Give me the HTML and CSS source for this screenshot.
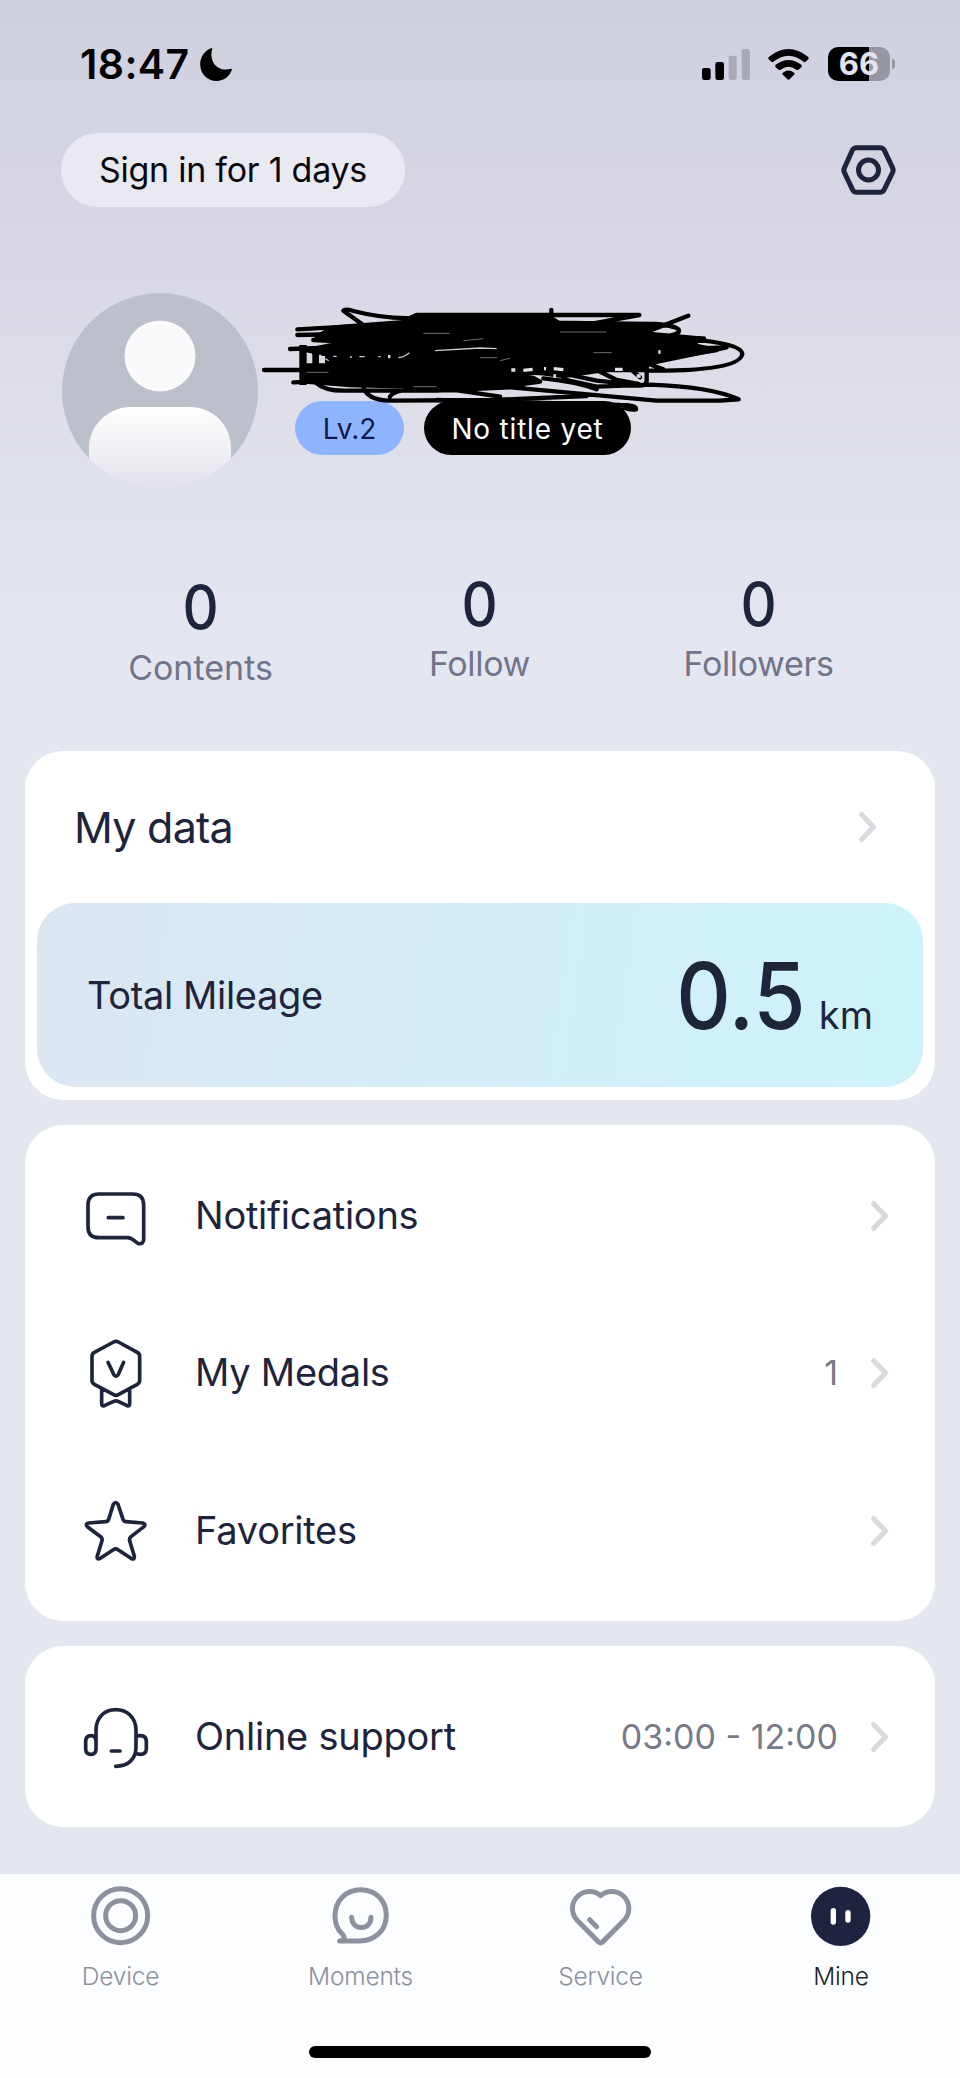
FILE: index.html
```html
<!DOCTYPE html>
<html lang="en">
<head>
<meta charset="utf-8">
<title>Mine</title>
<link rel="stylesheet" href="styles.css">
</head>
<body>
<div class="app">
  <header class="status">
    <div class="status-left">
      <span class="clock">18:47</span>
      <svg class="moon" viewBox="600 143 96 100"><path d="M637 144C628 172 640 200 664 207C675 210 686 208 694 206Q697 206 696 210C689 230 671 243 650 243C622 243 600 221 600 193C600 171 613 151 633 144Q637 143 637 144Z"/></svg>
    </div>
    <div class="status-right">
      <svg class="signal" viewBox="666 144 144 93">
        <rect x="666" y="201" width="26" height="36" rx="7"/><rect x="706" y="183" width="26" height="54" rx="7"/>
        <rect class="dim" x="746" y="164" width="24" height="73" rx="7"/><rect class="dim" x="785" y="144" width="25" height="93" rx="7"/>
      </svg>
      <svg class="wifi" viewBox="865 143 124 94"><path d="M867 167Q927 119 987 167Q990 171 987 174L979 182Q976 184 973 182Q927 145 881 182Q878 184 875 182L867 174Q864 171 867 167Z"/><path d="M888 191Q927 161 966 191Q969 195 966 198L957 206Q954 208 951 206Q927 187 903 206Q900 208 897 206L888 198Q885 195 888 191Z"/><path d="M910 215Q927 201 944 215Q948 218 944 221L931 234Q927 238 923 234L910 221Q906 218 910 215Z"/></svg>
      <div class="battery"><span class="battery-body">66</span><span class="battery-cap"></span></div>
    </div>
  </header>

  <div class="topbar">
    <span class="signin">Sign in for 1 days</span>
    <svg class="gear" viewBox="1085 434 164 150"><path d="M1130 442H1202Q1210 442 1214 449L1239 502Q1243 510 1239 517L1214 568Q1210 576 1202 576H1131Q1123 576 1119 568L1095 517Q1091 510 1095 502L1119 449Q1123 442 1130 442Z"/><circle cx="1167" cy="509" r="30"/></svg>
  </div>

  <section class="profile">
    <svg class="avatar" viewBox="0 0 196 196">
      <defs>
        <clipPath id="disc"><circle cx="98" cy="98" r="98"/></clipPath>
        <linearGradient id="torso" x1="0" y1="0" x2="0" y2="1"><stop offset="0" stop-color="#fff"/><stop offset="1" stop-color="#dfdfe9"/></linearGradient>
      </defs>
      <g clip-path="url(#disc)">
        <path d="M0 0H196V166H169V156C169 132 151 114 127 114H70C46 114 27 132 27 156V166H0Z" fill="#bbc0ca"/>
        <circle cx="98" cy="63" r="35.5" fill="#fafafd"/>
        <path d="M27 200V156C27 132 46 114 70 114H127C151 114 169 132 169 156V200Z" fill="url(#torso)"/>
      </g>
    </svg>
    <div class="badges">
      <span class="badge level">Lv.2</span>
      <span class="badge title">No title yet</span>
    </div>
    <svg class="scribble" viewBox="0 0 1560 540">
      <path class="mass" d="M200 140L250 113L480 98L500 76L890 76L925 98L1215 103L1180 130L1350 145L1330 165L1400 180L1200 212L1185 240H1060L940 258L880 250L700 240L850 264L870 275L760 290L560 292L300 285L165 275V240L250 245L480 200L440 205L200 190L170 180L270 160Z"/>
      <path d="M42 240H160M120 177L260 172M130 277L300 270M142 118L250 112L480 95M142 135L280 132L560 110M190 150L400 160"/>
      <path d="M340 105L280 62Q285 55 310 63Q400 86 480 84L500 75H1168L1010 104"/>
      <path d="M904 60V80M1315 77L1180 130M925 100L1220 102Q1300 110 1285 128Q1260 145 1190 138M1190 145H1362L1300 165H1200"/>
      <path d="M1200 155L1360 152Q1475 165 1477 192Q1470 238 1250 242H1190M1200 180L1430 172L1270 205L1190 222M1190 220L1240 238"/>
      <path d="M200 280Q225 302 280 302H560L820 290M340 290Q350 330 420 332L730 330L1010 318M420 320Q430 298 540 292M560 292L750 320M760 290L1220 332H1410L1466 328Q1380 290 1200 284L1040 290L940 268M880 265Q980 275 1040 298M1190 190V270Q1190 288 1165 287L1080 286M1040 240L1100 270L1165 282M1140 235L1170 262"/>
      <path d="M960 255L1040 272L1120 280"/>
      <path d="M560 330L1110 345Q1160 345 1158 358Q1145 362 1118 352"/>
      <path class="block" d="M148 165H170V285H148ZM187 175H207V250H187ZM160 220H400V275H160ZM205 180H440V192H205Z"/>
      <path class="block" d="M225 190H440V250H225Z"/>
      <path class="glint" d="M208 212Q220 198 236 212M207 196H214M250 199H260M300 201H306M328 200H344M385 200H392M445 203Q465 200 478 188M555 182L690 174L740 176"/>
      <path class="glint faint" d="M690 203H742M750 212L780 205M930 126H1068M520 130H600M640 152L700 146M170 247H235M490 290H560M1030 188H1085"/>
      <path class="glint wide" d="M414 200H421M784 240H796M820 241L848 238M882 236H888M911 236L940 239M910 258H918M1095 238H1118M1160 258H1172M1225 186H1232"/>
      <path class="gap" d="M171 190H186V217H171Z"/>
    </svg>
  </section>

  <section class="stats">
    <div class="stat first"><b>0</b><span>Contents</span></div>
    <div class="stat"><b>0</b><span>Follow</span></div>
    <div class="stat"><b>0</b><span>Followers</span></div>
  </section>

  <main class="cards">
    <section class="card data">
      <div class="data-head"><h2>My data</h2><svg class="chev" viewBox="0 0 17 30"><path d="M2.5 2.5L14.5 15L2.5 27.5"/></svg></div>
      <div class="mileage"><span class="mileage-label">Total Mileage</span><div class="reading"><span class="amount">0.5</span><span class="unit">km</span></div></div>
    </section>

    <section class="card menu">
      <div class="row">
        <svg class="icon" viewBox="102 71 192 192"><path d="M147 101H248Q281 101 281 134V238Q280 252 266 250C255 246 249 232 232 232H147Q114 232 114 199V134Q114 101 147 101ZM175 172H219"/></svg>
        <span class="name">Notifications</span>
        <svg class="chev" viewBox="0 0 17 30"><path d="M2.5 2.5L14.5 15L2.5 27.5"/></svg>
      </div>
      <div class="row">
        <svg class="icon" viewBox="102 543 192 192"><path d="M191 546Q198 542 205 546L262 577Q269 581 269 589V661Q269 669 262 673L205 704Q198 708 191 704L133 673Q126 669 126 661V589Q126 581 133 577ZM174 607L191 643Q198 655 205 643L221 607M155 687V732Q155 740 163 737L191 724Q198 721 205 724L231 737Q239 740 239 732V687"/></svg>
        <span class="name">My Medals</span><span class="value">1</span>
        <svg class="chev" viewBox="0 0 17 30"><path d="M2.5 2.5L14.5 15L2.5 27.5"/></svg>
      </div>
      <div class="row">
        <svg class="icon" viewBox="102 1015 192 192"><path d="M190 1031Q197 1020 204 1031L219 1076Q221 1083 228 1083L278 1087Q289 1090 282 1098L243 1128Q237 1133 239 1140L253 1187Q254 1199 243 1193L204 1167Q197 1162 190 1167L151 1193Q139 1198 142 1186L156 1140Q158 1133 152 1128L112 1098Q105 1089 116 1087L167 1083Q174 1083 176 1076Z"/></svg>
        <span class="name">Favorites</span>
        <svg class="chev" viewBox="0 0 17 30"><path d="M2.5 2.5L14.5 15L2.5 27.5"/></svg>
      </div>
    </section>

    <section class="card support">
      <div class="row">
        <svg class="icon" viewBox="102 256 192 192"><path d="M138 390V332C138 294 163 270 197 270C232 270 258 294 258 332V382C258 418 235 440 197 440M138 365C138 353 133 348 123 348C112 348 107 354 107 365V387C107 399 112 404 123 404C133 404 138 399 138 387M258 351C262 349 266 348 271 348C283 348 289 354 289 365V387C289 399 283 404 271 404C266 404 261 403 258 400M184 394H210"/></svg>
        <span class="name">Online support</span><span class="value">03:00 - 12:00</span>
        <svg class="chev" viewBox="0 0 17 30"><path d="M2.5 2.5L14.5 15L2.5 27.5"/></svg>
      </div>
    </section>
  </main>

  <nav class="tabs">
    <a class="tab"><svg viewBox="270 104 184 184"><circle cx="362" cy="196" r="81"/><circle cx="362" cy="196" r="45"/></svg><span>Device</span></a>
    <a class="tab"><svg viewBox="991 104 184 184"><path d="M1020 272C1034 272 1037 263 1029 252C1014 239 1006 218 1006 196C1006 150 1040 118 1083 118C1128 118 1160 151 1160 194C1160 244 1122 272 1080 272ZM1056 201C1056 242 1114 242 1114 201"/></svg><span>Moments</span></a>
    <a class="tab"><svg viewBox="270 104 184 184"><path d="M362 136C341 118 312 121 294 137C272 157 273 188 290 208L355 274Q362 281 369 274L434 208C451 188 452 157 430 137C412 121 383 118 362 136ZM329 208L350 229"/></svg><span>Service</span></a>
    <a class="tab active"><svg viewBox="993 104 184 184"><circle class="face" cx="1085" cy="198" r="89"/><path class="eyes" d="M1063 181V215M1107 187V209"/></svg><span>Mine</span></a>
  </nav>
  <div class="home"></div>
</div>
</body>
</html>
```
FILE: styles.css
```css
body { margin: 0; }
.app {
  width: 960px; height: 2078px; overflow: hidden;
  display: flex; flex-direction: column;
  font-family: Inter, "Noto Sans", sans-serif; color: #1e243b;
  background: linear-gradient(#cfd0de 0, #d5d5e2 170px, #dddee8 400px, #e5e7f0 660px);
}
svg { display: block; overflow: visible; flex: none; }

.status { height: 128px; box-sizing: border-box; padding: 0 65px 0 80px; display: flex; justify-content: space-between; align-items: center; color: #000; }
.status-left { display: flex; align-items: center; gap: 12px; }
.clock { font-size: 41px; font-weight: 600; line-height: 50px; letter-spacing: 0.4px; width: 108px; white-space: nowrap; }
.moon { width: 32px; height: 33px; }
.status-right { display: flex; align-items: center; }
.signal { width: 48px; height: 31px; margin-right: 18px; }
.signal .dim { fill: #a9aab6; }
.wifi { width: 41px; height: 31px; margin-right: 19px; }
.battery { display: flex; align-items: center; gap: 2px; }
.battery-body { width: 62px; height: 34px; border-radius: 10px; background: linear-gradient(90deg, #000 66%, #9697a1 66%); color: #e4e4ee; font-size: 31px; font-weight: 650; line-height: 34px; text-align: center; letter-spacing: 0; }
.battery-cap { width: 3px; height: 10px; border-radius: 0 3px 3px 0; background: #9697a1; }

.topbar { height: 84px; padding: 0 64px 0 61px; display: flex; justify-content: space-between; align-items: center; }
.signin { width: 344px; height: 74px; border-radius: 37px; background: #e9e9f2; color: #08080c; font-size: 34px; line-height: 73px; text-align: center; letter-spacing: -0.25px; white-space: nowrap; }
.gear { width: 55px; height: 50px; fill: none; stroke: #1e243b; stroke-width: 15; }

.profile { position: relative; height: 196px; margin-top: 81px; padding-left: 62px; display: flex; gap: 37px; }
.avatar { width: 196px; height: 196px; }
.badges { display: flex; gap: 20px; padding-top: 108px; }
.badge { height: 54px; border-radius: 27px; font-size: 28px; line-height: 56px; text-align: center; white-space: nowrap; }
.level { width: 109px; background: #8fb4ff; color: #111a4a; }
.title { width: 207px; background: #000; color: #fff; letter-spacing: 0.8px; }
.scribble { position: absolute; left: 250px; top: -3px; width: 520px; height: 180px; fill: none; stroke: #000; stroke-width: 13; stroke-linecap: round; stroke-linejoin: round; }
.scribble .mass { fill: #000; }
.scribble .block { fill: #000; stroke: none; }
.scribble .gap { fill: #dadae4; stroke: none; }
.scribble .glint { stroke: #c9c9d2; stroke-width: 4; stroke-linecap: butt; }
.scribble .faint { stroke: #6c6c74; stroke-width: 3; }
.scribble .wide { stroke: #e0e0e8; stroke-width: 10; }

.stats { height: 262px; padding: 0 61px; display: grid; grid-template-columns: 279px 279px 279px; }
.stat { display: flex; flex-direction: column; align-items: center; padding-top: 84px; }
.stat b { font-size: 61px; line-height: 62px; font-weight: 450; transform: scaleX(.92); }
.stat span { font-size: 34px; line-height: 40px; color: #71758a; margin-top: 9px; letter-spacing: -0.35px; }
.stat.first { padding-top: 87px; }
.stat.first span { margin-top: 10px; letter-spacing: 0; }

.cards { padding: 0 25px; display: flex; flex-direction: column; gap: 25px; height: 1123px; }
.card { background: #fff; border-radius: 38px; }
.chev { width: 17px; height: 30px; fill: none; stroke: #d9d9df; stroke-width: 5; stroke-linecap: round; stroke-linejoin: round; }
.data { height: 349px; padding: 0 12px; box-sizing: border-box; }
.data-head { height: 152px; padding: 0 47px 0 37px; display: flex; align-items: center; justify-content: space-between; }
.data-head h2 { margin: 0; font-size: 43px; font-weight: 400; line-height: 52px; letter-spacing: -0.75px; }
.mileage { height: 184px; border-radius: 38px; padding: 0 50px; display: flex; align-items: center; justify-content: space-between; font-size: 38px; background: linear-gradient(98deg, #dce6f2, #d4ecf7 45%, #cdf4fb); }
.mileage-label { letter-spacing: -0.35px; }
.reading { display: flex; align-items: baseline; line-height: 100px; padding-top: 20px; }
.amount { font-size: 92px; font-weight: 450; transform: scaleX(.92); transform-origin: right; }
.unit { margin-left: 13px; }
.menu { padding: 12px 0; height: 472px; }
.support { padding: 12px 0; height: 157px; }
.row { height: 157.5px; padding: 0 47px 0 59px; display: flex; align-items: center; }
.icon { width: 64px; height: 64px; margin-right: 47px; fill: none; stroke: #1e243b; stroke-width: 11; stroke-linecap: round; stroke-linejoin: round; }
.name { flex: 1; font-size: 38px; line-height: 48px; margin-bottom: 2px; letter-spacing: -0.25px; }
.value { font-size: 34px; line-height: 44px; color: #777a87; margin-right: 33px; }

.tabs { height: 172px; background: #fbfdff; display: grid; grid-template-columns: repeat(4, 1fr); }
.tab { display: flex; flex-direction: column; align-items: center; padding: 11px 0 0 1px; color: #8e909c; font-size: 24.5px; font-weight: 300; letter-spacing: -0.2px; }
.tab svg { width: 61.3px; height: 61.3px; fill: none; stroke: #8e909f; stroke-width: 15; stroke-linecap: round; stroke-linejoin: round; }
.tab span { line-height: 32px; margin-top: 14px; }
.tab.active { color: #1e1f2a; padding-left: 2px; }
.tab .face { fill: #1e243f; stroke: none; }
.tab .eyes { stroke: #fff; stroke-width: 16; }
.home { flex: 1; background: #fbfdff; }
.home::before { content: ""; display: block; width: 342px; height: 12px; margin: 0 auto; border-radius: 6px; background: #000; }
```
